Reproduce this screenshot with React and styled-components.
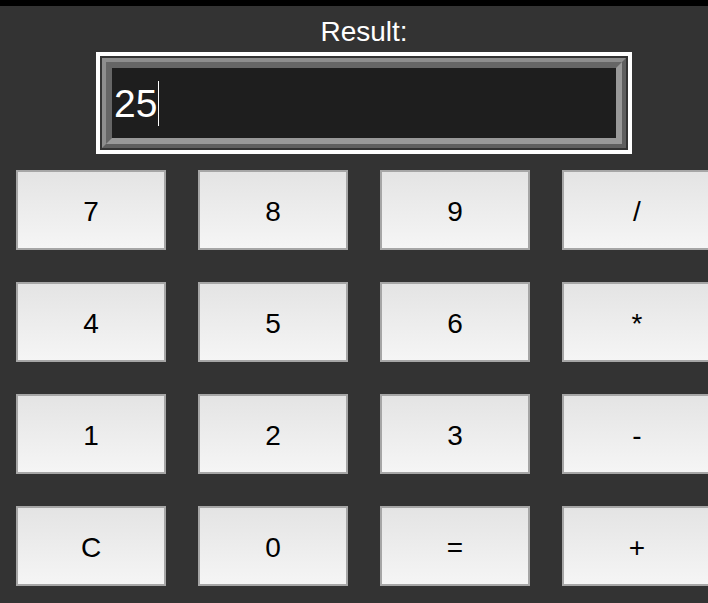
import React, { useState } from "react";
import styled, { createGlobalStyle } from "styled-components";

const GlobalStyle = createGlobalStyle`
  html, body {
    margin: 0;
    padding: 0;
    background: #333333;
    overflow: hidden;
  }
`;

const KEYS = ["7", "8", "9", "/", "4", "5", "6", "*", "1", "2", "3", "-", "C", "0", "=", "+"];

const App = () => {
  const [display] = useState("25");

  return (
    <Page>
      <GlobalStyle />
      <TopBar />
      <Calculator>
        <Label>Result:</Label>
        <Frame>
          <Bevel>
            <Screen>
              {display}
              <Caret />
            </Screen>
          </Bevel>
        </Frame>
        <Keypad>
          {KEYS.map(key => (
            <Key key={key} type="button">
              {key}
            </Key>
          ))}
        </Keypad>
      </Calculator>
    </Page>
  );
};

const Page = styled.div`
  width: 728px;
  min-height: 603px;
  background: #333333;
  font-family: "Liberation Sans", Arial, sans-serif;
`;

const TopBar = styled.div`
  height: 6px;
  background: #000000;
`;

const Calculator = styled.div`
  display: flex;
  flex-direction: column;
  align-items: center;
  padding-top: 10px;
`;

const Label = styled.div`
  color: #ffffff;
  font-size: 28px;
  line-height: 32px;
  margin-bottom: 4px;
`;

const Frame = styled.div`
  border: 4px solid #ffffff;
  padding: 2px;
  background: #333333;
`;

const Bevel = styled.div`
  border-style: solid;
  border-width: 4px;
  border-color: #8e8e8e #5f5f5f #5f5f5f #8e8e8e;
`;

const Screen = styled.div`
  display: flex;
  align-items: center;
  width: 502px;
  height: 70px;
  padding-left: 2px;
  border-style: solid;
  border-width: 6px;
  border-color: #666666 #999999 #999999 #666666;
  background: #1e1e1e;
  color: #ffffff;
  font-size: 39px;
  line-height: 45px;
`;

const Caret = styled.span`
  display: inline-block;
  width: 1px;
  height: 45px;
  margin-left: 1px;
  background: #ffffff;
`;

const Keypad = styled.div`
  display: grid;
  grid-template-columns: repeat(4, 150px);
  grid-auto-rows: 80px;
  gap: 32px;
  padding: 16px;
`;

const Key = styled.button`
  box-sizing: border-box;
  width: 150px;
  height: 80px;
  padding: 3px 0 0;
  border: 2px solid #a6a6a6;
  border-radius: 0;
  background: linear-gradient(to bottom, #e4e4e4, #f5f5f5);
  color: #000000;
  font-family: "Liberation Sans", Arial, sans-serif;
  font-size: 28px;
  cursor: pointer;
`;

export default App;
